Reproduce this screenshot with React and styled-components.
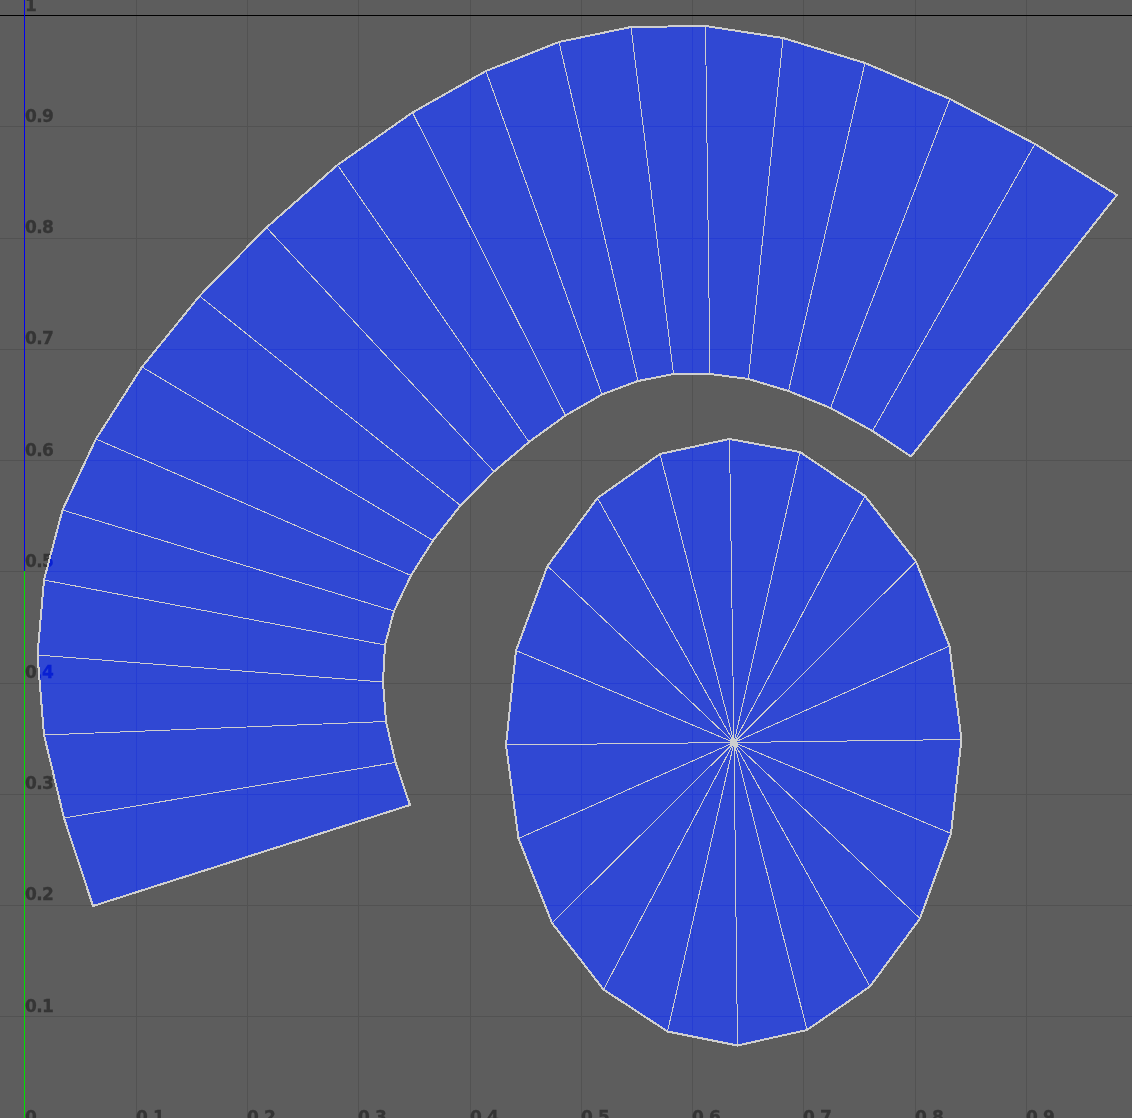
import React from 'react';
import styled, { createGlobalStyle } from 'styled-components';

const Global = createGlobalStyle`
  html, body { margin: 0; padding: 0; background: #5d5d5d; }
  #root { width: 1132px; height: 1118px; overflow: hidden; }
`;
const Stage = styled.svg`
  display: block;
  width: 1132px;
  height: 1118px;
  background: #5d5d5d;
`;
const GridLine = styled.line`
  stroke: #525252;
  stroke-width: 1;
  shape-rendering: crispEdges;
`;
const AxisLine = styled.line`
  stroke: ${p => p.$color};
  stroke-width: 1;
  shape-rendering: crispEdges;
`;
const Tick = styled.text`
  font-family: "DejaVu Sans", sans-serif;
  font-weight: 700;
  font-size: 17px;
  letter-spacing: -0.6px;
  fill: #353535;
  stroke: #353535;
  stroke-width: 0.3px;
`;
/* The selection tint darkens what lies below it, so grid and ticks stay visible. */
const TintShade = styled.polygon`
  fill: rgb(45, 21, 0);
  mix-blend-mode: difference;
`;
const TintBlue = styled.polygon`
  fill: rgb(0, 0, 211);
  mix-blend-mode: lighten;
`;
const Outline = styled.polygon`
  fill: none;
  stroke: #cfcfcf;
  stroke-width: 2;
  stroke-linejoin: miter;
  shape-rendering: crispEdges;
`;
const Edge = styled.line`
  stroke: #cfcfcf;
  stroke-width: 1;
  shape-rendering: crispEdges;
`;
const HubDot = styled.circle`
  fill: #cfcfcf;
`;

const outer = [[93,906],[64,818],[44,735],[37.5,655],[44,580],[62.5,510],[96,439],[142,367],[199.5,296],[266.5,227.5],[337.5,165],[412.5,112.5],[486,71],[559,42],[631,27],[705.5,26],[783,38],[865,63],[950,99],[1035,144],[1117,195]];
const inner = [[410,805],[395.5,762.5],[386,721.5],[383,682],[385,645],[394,611],[411,575.5],[433,540.5],[460.5,505.5],[494,471.5],[529,442],[565.5,415.5],[602,394.5],[638,381],[673.5,374],[710,374],[748.5,379],[788.5,391],[830.5,408],[872.5,431],[911,456.5]];
const hub = [734,742.5];
const rim = [[729.5,439],[800,452],[865,496],[916,561.5],[949.5,646],[961.5,739.5],[951,833.5],[920,918.5],[870,986.5],[807,1030],[737.5,1045.5],[667.5,1031.5],[603.5,989.5],[552,923],[518.5,838.5],[506,745],[516,650.5],[547.5,566],[597.5,498],[660,454]];

const xs = [136,247,358,470,581,692,803,915,1026];
const ys = [126,238,349,460,571,683,794,905,1016];
const yTicks = ['0.9','0.8','0.7','0.6','0.5','0.4','0.3','0.2','0.1'];
const xTicks = ['0.1','0.2','0.3','0.4','0.5','0.6','0.7','0.8','0.9'];
const pts = a => a.map(p => p.join(',')).join(' ');

function Island({ boundary, spokes }) {
  const points = pts(boundary);
  return (
    <>
      <TintShade points={points} />
      <TintBlue points={points} />
      {spokes.map(([a, b], i) => <Edge key={i} x1={a[0]} y1={a[1]} x2={b[0]} y2={b[1]} />)}
      <Outline points={points} />
    </>
  );
}

export default function App() {
  return (
    <>
      <Global />
      <Stage viewBox="0 0 1132 1118">
        {xs.map(x => <GridLine key={x} x1={x + .5} x2={x + .5} y1={0} y2={1118} />)}
        {ys.map(y => <GridLine key={y} y1={y + .5} y2={y + .5} x1={0} x2={1132} />)}
        <AxisLine $color="#000" x1={0} x2={1132} y1={15.5} y2={15.5} />
        <AxisLine $color="#0000f0" x1={24.5} x2={24.5} y1={0} y2={571} />
        <AxisLine $color="#00e000" x1={24.5} x2={24.5} y1={571} y2={1118} />
        <Tick x={25} y={11}>1</Tick>
        {yTicks.map((t, i) => <Tick key={t} x={25} y={122 + i * 111.2}>{t}</Tick>)}
        <Tick x={25} y={1123}>0</Tick>
        {xTicks.map((t, i) => <Tick key={t} x={xs[i]} y={1123}>{t}</Tick>)}
        <Island boundary={[...outer, ...[...inner].reverse()]} spokes={outer.map((p, i) => [p, inner[i]])} />
        <Island boundary={rim} spokes={rim.map(p => [p, hub])} />
        <HubDot cx={hub[0]} cy={hub[1]} r={2.5} />
      </Stage>
    </>
  );
}
